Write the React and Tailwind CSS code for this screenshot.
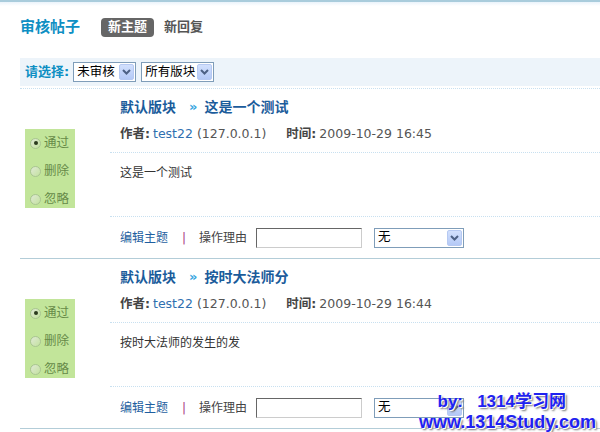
import React from 'react';

const posts = [
  {
    id: 1,
    forum: '默认版块',
    subject: '这是一个测试',
    author: 'test22',
    ip: '127.0.0.1',
    time: '2009-10-29 16:45',
    message: '这是一个测试',
  },
  {
    id: 2,
    forum: '默认版块',
    subject: '按时大法师分',
    author: 'test22',
    ip: '127.0.0.1',
    time: '2009-10-29 16:44',
    message: '按时大法师的发生的发',
  },
];

function Chevron() {
  return (
    <svg width="9" height="6" viewBox="0 0 9 6">
      <path d="M1 1 L4.5 4.5 L8 1" fill="none" stroke="#4d6185" strokeWidth="2" />
    </svg>
  );
}

function FakeSelect({ value, width }) {
  return (
    <div
      className="h-[20px] border border-[#7f9db9] bg-white flex items-center justify-between pl-[3px] pr-[1px]"
      style={{ width }}
    >
      <span className="text-[12.5px] text-black leading-none">{value}</span>
      <span className="w-[15px] h-[16px] rounded-[2px] border border-[#b6c9f2] bg-gradient-to-b from-[#d2e0fd] to-[#b4c9f6] flex items-center justify-center">
        <Chevron />
      </span>
    </div>
  );
}

function Radio({ checked, label }) {
  return (
    <div className="h-[28px] flex items-center pl-[5px] gap-[3px]">
      <span className="w-[11px] h-[11px] rounded-full border border-[#a9c592] bg-gradient-to-br from-[#dfe9d4] to-[#c4e29f] flex items-center justify-center">
        {checked && <span className="w-[4px] h-[4px] rounded-full bg-[#2a3a1e]" />}
      </span>
      <span className="text-[12.5px] text-[#668a48]">{label}</span>
    </div>
  );
}

function Post({ post }) {
  return (
    <div className="flex border-b border-[#b3cdd8]">
      <div className="w-[90px] pt-[40px] pl-[5px]">
        <div className="w-[50px] h-[79px] bg-[#c2e59a] overflow-hidden">
          <Radio checked label="通过" />
          <Radio label="删除" />
          <Radio label="忽略" />
        </div>
      </div>
      <div className="flex-1">
        <div className="h-[36px] pl-[10px] flex items-center text-[14px] font-bold text-[#1b5c9b]">
          <span>{post.forum}</span>
          <span className="ml-[13px] mr-[7px] text-[#35a4e0] text-[13px]">»</span>
          <span>{post.subject}</span>
        </div>
        <div className="h-[18px] pl-[10px] flex items-center text-[12.5px] text-[#555]">
          <span className="font-bold text-[#444] text-[12.5px]">作者:</span>
          <span className="ml-[3px] text-[#2f6fb0]">{post.author}</span>
          <span className="ml-[4px]">({post.ip})</span>
          <span className="ml-[20px] font-bold text-[#444] text-[12.5px]">时间:</span>
          <span className="ml-[3px]">{post.time}</span>
        </div>
        <div className="mt-[9px] border-t border-dotted border-[#c8e0f0] h-[64px] pl-[10px] pt-[13px] text-[12px] text-[#333] leading-[14px]">
          {post.message}
        </div>
        <div className="border-t border-dotted border-[#c8e0f0] h-[42px] pl-[10px] flex items-center text-[12px]">
          <span className="text-[#1f5fa0]">编辑主题</span>
          <span className="ml-[14px] text-[#a8407e]">|</span>
          <span className="ml-[13px] text-[#444]">操作理由</span>
          <input
            type="text"
            className="ml-[9px] w-[106px] h-[20px] border border-t-[#666] border-l-[#666] border-b-[#ccc] border-r-[#ccc] outline-none"
          />
          <div className="ml-[12px]">
            <FakeSelect value="无" width={90} />
          </div>
        </div>
      </div>
    </div>
  );
}

export default function App() {
  return (
    <div className="relative w-[600px] h-[432px] overflow-hidden bg-white font-['DejaVu_Sans','Noto_Sans_CJK_SC',sans-serif]">
      {/* top strip */}
      <div className="h-[6px] border-t-2 border-[#a9ccdc] bg-gradient-to-b from-[#eaf3fb] to-white" />

      {/* header */}
      <div className="h-[42px] pl-[20px] flex items-center">
        <h2 className="text-[15px] font-bold text-[#0e8fc3]">审核帖子</h2>
        <span className="ml-[21px] px-[7px] h-[19px] rounded-[4px] bg-[#666] text-white text-[13px] font-bold flex items-center">
          新主题
        </span>
        <span className="ml-[10px] text-[13px] font-bold text-[#555]">新回复</span>
      </div>

      {/* filter bar */}
      <div className="mt-[10px] ml-[20px] h-[28px] bg-[#edf4fa] flex items-center pl-[5px]">
        <span className="text-[13px] font-bold text-[#0e8fc3]">请选择:</span>
        <div className="ml-[4px]">
          <FakeSelect value="未审核" width={63} />
        </div>
        <div className="ml-[5px]">
          <FakeSelect value="所有版块" width={73} />
        </div>
      </div>
      <div className="ml-[20px] mt-[2px] border-t border-dotted border-[#c8e0f0]" />

      {/* posts */}
      <div className="ml-[20px]">
        {posts.map((post) => (
          <Post key={post.id} post={post} />
        ))}
      </div>

      {/* watermark */}
      <div className="absolute right-[4px] bottom-0 text-right font-['Liberation_Sans','Noto_Sans_CJK_SC',sans-serif] font-bold text-[#1f22f0] [text-shadow:1px_1px_0_#fff,2px_2px_2px_#777] leading-[20px]">
        <div className="text-[17px] pr-[30px]">by:&nbsp;&nbsp;&nbsp;1314学习网</div>
        <div className="text-[18px]">www.1314Study.com</div>
      </div>
    </div>
  );
}
